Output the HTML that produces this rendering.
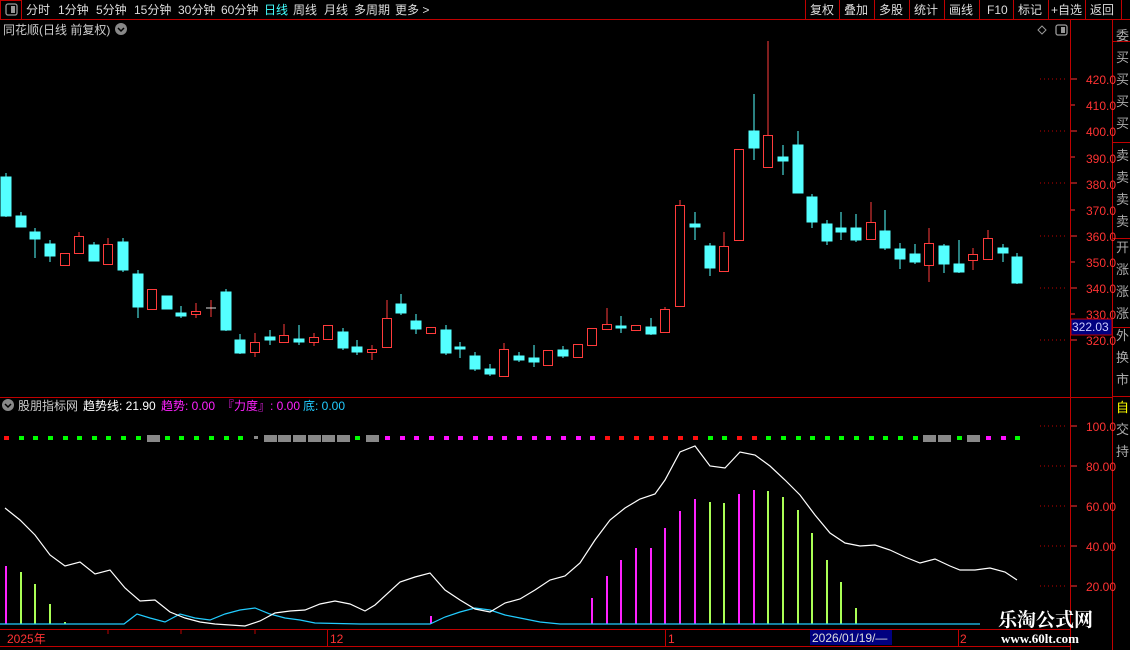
<!DOCTYPE html>
<html><head><meta charset="utf-8"><style>
body{margin:0;width:1130px;height:650px;background:#000;overflow:hidden;font-family:"Liberation Sans","Noto Sans CJK SC",sans-serif;}
svg{position:absolute;left:0;top:0}
</style></head><body>
<svg width="1130" height="650" xmlns="http://www.w3.org/2000/svg" font-family="Liberation Sans, Noto Sans CJK SC, sans-serif">
<!-- top bar -->
<g stroke="#c00000" fill="none">
<line x1="0" y1="19.5" x2="1130" y2="19.5"/>
<rect x="0.5" y="0.5" width="21" height="19"/>
<line x1="805.5" y1="0" x2="805.5" y2="19"/><line x1="839.5" y1="0" x2="839.5" y2="19"/><line x1="874.5" y1="0" x2="874.5" y2="19"/><line x1="909.5" y1="0" x2="909.5" y2="19"/><line x1="944.5" y1="0" x2="944.5" y2="19"/><line x1="979.5" y1="0" x2="979.5" y2="19"/><line x1="1013.5" y1="0" x2="1013.5" y2="19"/><line x1="1048.5" y1="0" x2="1048.5" y2="19"/><line x1="1085.5" y1="0" x2="1085.5" y2="19"/><line x1="1121.5" y1="0" x2="1121.5" y2="19"/>
<line x1="1070.5" y1="19" x2="1070.5" y2="650"/>
<line x1="1112.5" y1="19" x2="1112.5" y2="650"/>
<line x1="0" y1="397.5" x2="1112" y2="397.5"/>
<line x1="0" y1="629.5" x2="1070" y2="629.5"/>
<line x1="0" y1="646.5" x2="1070" y2="646.5"/>
<line x1="1112" y1="41.5" x2="1130" y2="41.5"/><line x1="1112" y1="142.5" x2="1130" y2="142.5"/><line x1="1112" y1="238.5" x2="1130" y2="238.5"/><line x1="1112" y1="327.5" x2="1130" y2="327.5"/><line x1="1112" y1="396.5" x2="1130" y2="396.5"/>
</g>
<rect x="6" y="4" width="11" height="11" rx="2" fill="none" stroke="#999" stroke-width="1.3"/><rect x="11" y="6" width="4" height="7" fill="#999"/>
<g font-size="12" fill="#ddd">
<text x="26" y="14">分时</text><text x="58" y="14">1分钟</text><text x="96" y="14">5分钟</text><text x="134" y="14">15分钟</text><text x="178" y="14">30分钟</text><text x="221" y="14">60分钟</text>
<text x="264" y="14" fill="#4ff">日线</text><text x="293" y="14">周线</text><text x="324" y="14">月线</text><text x="354" y="14">多周期</text><text x="395" y="14">更多 &gt;</text>
<text x="810" y="14">复权</text><text x="844" y="14">叠加</text><text x="879" y="14">多股</text><text x="914" y="14">统计</text><text x="949" y="14">画线</text><text x="987" y="14">F10</text><text x="1018" y="14">标记</text><text x="1051" y="14">+自选</text><text x="1090" y="14">返回</text>
<text x="3" y="34" fill="#ccc">同花顺(日线 前复权)</text>
</g>
<circle cx="121" cy="29" r="6" fill="#888"/><path d="M118 28l3 3 3-3" stroke="#000" stroke-width="1.5" fill="none"/>
<path d="M1042 26l4 4-4 4-4-4z" fill="none" stroke="#999"/>
<rect x="1056" y="25" width="11" height="10" rx="2" fill="none" stroke="#999" stroke-width="1.3"/><rect x="1061" y="27" width="4" height="6" fill="#999"/>
<!-- price axis -->
<g font-size="12" fill="#ff3333">
<text x="1086" y="84">420.0</text><text x="1086" y="110">410.0</text><text x="1086" y="136">400.0</text><text x="1086" y="163">390.0</text><text x="1086" y="189">380.0</text><text x="1086" y="215">370.0</text><text x="1086" y="241">360.0</text><text x="1086" y="267">350.0</text><text x="1086" y="293">340.0</text><text x="1086" y="319">330.0</text><text x="1086" y="345">320.0</text>
</g>
<g stroke="#ff3333"><line x1="1071" y1="79" x2="1077" y2="79"/><line x1="1071" y1="105" x2="1075" y2="105"/><line x1="1071" y1="131" x2="1077" y2="131"/><line x1="1071" y1="157" x2="1075" y2="157"/><line x1="1071" y1="183" x2="1077" y2="183"/><line x1="1071" y1="210" x2="1075" y2="210"/><line x1="1071" y1="236" x2="1077" y2="236"/><line x1="1071" y1="262" x2="1075" y2="262"/><line x1="1071" y1="288" x2="1077" y2="288"/><line x1="1071" y1="314" x2="1075" y2="314"/><line x1="1071" y1="340" x2="1077" y2="340"/></g>
<g stroke="#c00000" stroke-dasharray="1 3"><line x1="1040" y1="79" x2="1068" y2="79"/><line x1="1040" y1="131" x2="1068" y2="131"/><line x1="1040" y1="183" x2="1068" y2="183"/><line x1="1040" y1="236" x2="1068" y2="236"/><line x1="1040" y1="288" x2="1068" y2="288"/><line x1="1040" y1="340" x2="1068" y2="340"/>
<line x1="1040" y1="426" x2="1068" y2="426"/><line x1="1040" y1="466" x2="1068" y2="466"/><line x1="1040" y1="506" x2="1068" y2="506"/><line x1="1040" y1="546" x2="1068" y2="546"/><line x1="1040" y1="586" x2="1068" y2="586"/></g>
<rect x="1071" y="319" width="41" height="16" fill="#000080" stroke="#c00000"/>
<text x="1072" y="331" font-size="12" fill="#ccf">322.03</text>
<g font-size="13" fill="#aaa"><text x="1116" y="40">委</text><text x="1116" y="62">买</text><text x="1116" y="84">买</text><text x="1116" y="106">买</text><text x="1116" y="128">买</text><text x="1116" y="160">卖</text><text x="1116" y="182">卖</text><text x="1116" y="204">卖</text><text x="1116" y="226">卖</text><text x="1116" y="252">开</text><text x="1116" y="274">涨</text><text x="1116" y="296">涨</text><text x="1116" y="318">涨</text><text x="1116" y="340">外</text><text x="1116" y="362">换</text><text x="1116" y="384">市</text>
<text x="1116" y="412" fill="#ff0">自</text><text x="1116" y="434">交</text><text x="1116" y="456">持</text></g>
<!-- candles -->
<g id="c" stroke-width="1"></g>
<g>
<!-- cyan filled: x center, body top,bottom, wick top,bottom -->
</g>
<g stroke="#54ffff" fill="#54ffff">
<line x1="6" y1="173" x2="6" y2="217"/><rect x="1" y="177" width="10" height="39"/>
<rect x="16" y="216" width="10" height="11"/><line x1="21" y1="212" x2="21" y2="227"/>
<line x1="35" y1="228" x2="35" y2="258"/><rect x="30" y="232" width="10" height="7"/>
<line x1="50" y1="240" x2="50" y2="262"/><rect x="45" y="244" width="10" height="12"/>
<line x1="94" y1="242" x2="94" y2="261"/><rect x="89" y="245" width="10" height="16"/>
<line x1="123" y1="238" x2="123" y2="272"/><rect x="118" y="242" width="10" height="28"/>
<line x1="138" y1="270" x2="138" y2="318"/><rect x="133" y="274" width="10" height="33"/>
<rect x="162" y="296" width="10" height="13"/>
<line x1="181" y1="306" x2="181" y2="318"/><rect x="176" y="313" width="10" height="3"/>
<line x1="226" y1="289" x2="226" y2="331"/><rect x="221" y="292" width="10" height="38"/>
<line x1="240" y1="334" x2="240" y2="354"/><rect x="235" y="340" width="10" height="13"/>
<line x1="270" y1="330" x2="270" y2="345"/><rect x="265" y="337" width="10" height="3"/>
<line x1="299" y1="325" x2="299" y2="345"/><rect x="294" y="339" width="10" height="3"/>
<line x1="343" y1="328" x2="343" y2="350"/><rect x="338" y="332" width="10" height="16"/>
<line x1="357" y1="340" x2="357" y2="355"/><rect x="352" y="347" width="10" height="5"/>
<line x1="401" y1="294" x2="401" y2="315"/><rect x="396" y="304" width="10" height="9"/>
<line x1="416" y1="314" x2="416" y2="334"/><rect x="411" y="321" width="10" height="8"/>
<line x1="446" y1="325" x2="446" y2="355"/><rect x="441" y="330" width="10" height="23"/>
<line x1="460" y1="342" x2="460" y2="358"/><rect x="455" y="347" width="10" height="2"/>
<line x1="475" y1="352" x2="475" y2="371"/><rect x="470" y="356" width="10" height="13"/>
<line x1="490" y1="364" x2="490" y2="376"/><rect x="485" y="369" width="10" height="5"/>
<line x1="519" y1="352" x2="519" y2="362"/><rect x="514" y="356" width="10" height="4"/>
<line x1="534" y1="345" x2="534" y2="367"/><rect x="529" y="358" width="10" height="4"/>
<line x1="563" y1="346" x2="563" y2="358"/><rect x="558" y="350" width="10" height="6"/>
<line x1="621" y1="316" x2="621" y2="333"/><rect x="616" y="326" width="10" height="2"/>
<line x1="651" y1="318" x2="651" y2="335"/><rect x="646" y="327" width="10" height="7"/>
<line x1="695" y1="212" x2="695" y2="240"/><rect x="690" y="224" width="10" height="3"/>
<line x1="710" y1="243" x2="710" y2="276"/><rect x="705" y="246" width="10" height="22"/>
<line x1="754" y1="94" x2="754" y2="160"/><rect x="749" y="131" width="10" height="17"/>
<line x1="783" y1="145" x2="783" y2="175"/><rect x="778" y="157" width="10" height="4"/>
<line x1="798" y1="131" x2="798" y2="193"/><rect x="793" y="145" width="10" height="48"/>
<line x1="812" y1="194" x2="812" y2="228"/><rect x="807" y="197" width="10" height="25"/>
<line x1="827" y1="220" x2="827" y2="245"/><rect x="822" y="224" width="10" height="17"/>
<line x1="841" y1="212" x2="841" y2="240"/><rect x="836" y="228" width="10" height="4"/>
<line x1="856" y1="214" x2="856" y2="242"/><rect x="851" y="228" width="10" height="12"/>
<line x1="885" y1="210" x2="885" y2="250"/><rect x="880" y="231" width="10" height="17"/>
<line x1="900" y1="243" x2="900" y2="269"/><rect x="895" y="249" width="10" height="10"/>
<line x1="915" y1="244" x2="915" y2="264"/><rect x="910" y="254" width="10" height="8"/>
<line x1="944" y1="244" x2="944" y2="273"/><rect x="939" y="246" width="10" height="18"/>
<line x1="959" y1="240" x2="959" y2="273"/><rect x="954" y="264" width="10" height="8"/>
<line x1="1003" y1="244" x2="1003" y2="262"/><rect x="998" y="248" width="10" height="5"/>
<line x1="1017" y1="253" x2="1017" y2="284"/><rect x="1012" y="257" width="10" height="26"/>
</g>
<g stroke="#ff3b3b" fill="#000">
<rect x="60.5" y="253.5" width="9" height="12"/>
<line x1="79" y1="232" x2="79" y2="236"/><rect x="74.5" y="236.5" width="9" height="17"/>
<line x1="108" y1="238" x2="108" y2="244"/><rect x="103.5" y="244.5" width="9" height="20"/>
<rect x="147.5" y="289.5" width="9" height="20"/>
<line x1="196" y1="303" x2="196" y2="318"/><rect x="191.5" y="311.5" width="9" height="3"/>
<line x1="211" y1="300" x2="211" y2="317"/><line x1="206" y1="308" x2="216" y2="308" stroke="#ddd"/>
<line x1="255" y1="333" x2="255" y2="357"/><rect x="250.5" y="342.5" width="9" height="10"/>
<line x1="284" y1="324" x2="284" y2="343"/><rect x="279.5" y="335.5" width="9" height="7"/>
<line x1="314" y1="333" x2="314" y2="346"/><rect x="309.5" y="337.5" width="9" height="5"/>
<rect x="323.5" y="325.5" width="9" height="14"/>
<line x1="372" y1="345" x2="372" y2="360"/><rect x="367.5" y="349.5" width="9" height="3"/>
<line x1="387" y1="300" x2="387" y2="318"/><rect x="382.5" y="318.5" width="9" height="29"/>
<rect x="426.5" y="327.5" width="9" height="6"/>
<line x1="504" y1="343" x2="504" y2="349"/><rect x="499.5" y="349.5" width="9" height="27"/>
<rect x="543.5" y="350.5" width="9" height="15"/>
<rect x="573.5" y="344.5" width="9" height="13"/>
<rect x="587.5" y="328.5" width="9" height="17"/>
<line x1="607" y1="308" x2="607" y2="324"/><rect x="602.5" y="324.5" width="9" height="5"/>
<rect x="631.5" y="325.5" width="9" height="5"/>
<line x1="665" y1="307" x2="665" y2="309"/><rect x="660.5" y="309.5" width="9" height="23"/>
<line x1="680" y1="200" x2="680" y2="205"/><rect x="675.5" y="205.5" width="9" height="101"/>
<line x1="724" y1="232" x2="724" y2="246"/><rect x="719.5" y="246.5" width="9" height="25"/>
<rect x="734.5" y="149.5" width="9" height="91"/>
<line x1="768" y1="41" x2="768" y2="135"/><rect x="763.5" y="135.5" width="9" height="32"/>
<line x1="871" y1="202" x2="871" y2="222"/><rect x="866.5" y="222.5" width="9" height="17"/>
<line x1="929" y1="228" x2="929" y2="243"/><line x1="929" y1="266" x2="929" y2="282"/><rect x="924.5" y="243.5" width="9" height="22"/>
<line x1="973" y1="248" x2="973" y2="270"/><rect x="968.5" y="254.5" width="9" height="6"/>
<line x1="988" y1="230" x2="988" y2="238"/><rect x="983.5" y="238.5" width="9" height="21"/>
</g>
<!-- indicator header -->
<circle cx="8" cy="405" r="6" fill="#888"/><path d="M5 404l3 3 3-3" stroke="#000" stroke-width="1.5" fill="none"/>
<g font-size="12"><text x="18" y="410" fill="#ccc">股朋指标网</text><text x="83" y="410" fill="#fff">趋势线: 21.90</text><text x="161" y="410" fill="#ff22ff">趋势: 0.00</text><text x="222" y="410" fill="#ff22ff">『力度』: 0.00</text><text x="303" y="410" fill="#22ccff">底: 0.00</text></g>
<!-- lower axis -->
<g font-size="12" fill="#ff3333"><text x="1086" y="431">100.0</text><text x="1086" y="471">80.00</text><text x="1086" y="511">60.00</text><text x="1086" y="551">40.00</text><text x="1086" y="591">20.00</text></g>
<g stroke="#ff3333"><line x1="1071" y1="426" x2="1077" y2="426"/><line x1="1071" y1="466" x2="1077" y2="466"/><line x1="1071" y1="506" x2="1077" y2="506"/><line x1="1071" y1="546" x2="1077" y2="546"/><line x1="1071" y1="586" x2="1077" y2="586"/></g>
<!-- dots -->
<g>
<rect x="4" y="436" width="5" height="4" fill="#ff1010"/>
<g fill="#00ff00"><rect x="19" y="436" width="5" height="4"/><rect x="33" y="436" width="5" height="4"/><rect x="48" y="436" width="5" height="4"/><rect x="63" y="436" width="5" height="4"/><rect x="77" y="436" width="5" height="4"/><rect x="92" y="436" width="5" height="4"/><rect x="106" y="436" width="5" height="4"/><rect x="121" y="436" width="5" height="4"/><rect x="136" y="436" width="5" height="4"/><rect x="165" y="436" width="5" height="4"/><rect x="179" y="436" width="5" height="4"/><rect x="194" y="436" width="5" height="4"/><rect x="209" y="436" width="5" height="4"/><rect x="224" y="436" width="5" height="4"/><rect x="238" y="436" width="5" height="4"/><rect x="355" y="436" width="5" height="4"/>
<rect x="708" y="436" width="5" height="4"/><rect x="722" y="436" width="5" height="4"/><rect x="766" y="436" width="5" height="4"/><rect x="781" y="436" width="5" height="4"/><rect x="796" y="436" width="5" height="4"/><rect x="810" y="436" width="5" height="4"/><rect x="825" y="436" width="5" height="4"/><rect x="839" y="436" width="5" height="4"/><rect x="854" y="436" width="5" height="4"/><rect x="869" y="436" width="5" height="4"/><rect x="883" y="436" width="5" height="4"/><rect x="898" y="436" width="5" height="4"/><rect x="913" y="436" width="5" height="4"/><rect x="957" y="436" width="5" height="4"/><rect x="1015" y="436" width="5" height="4"/></g>
<g fill="#888"><rect x="147" y="435" width="13" height="7"/><rect x="254" y="436" width="4" height="3"/><rect x="264" y="435" width="13" height="7"/><rect x="278" y="435" width="13" height="7"/><rect x="293" y="435" width="13" height="7"/><rect x="308" y="435" width="13" height="7"/><rect x="322" y="435" width="13" height="7"/><rect x="337" y="435" width="13" height="7"/><rect x="366" y="435" width="13" height="7"/><rect x="923" y="435" width="13" height="7"/><rect x="938" y="435" width="13" height="7"/><rect x="967" y="435" width="13" height="7"/></g>
<g fill="#ff10ff"><rect x="385" y="436" width="5" height="4"/><rect x="400" y="436" width="5" height="4"/><rect x="414" y="436" width="5" height="4"/><rect x="429" y="436" width="5" height="4"/><rect x="444" y="436" width="5" height="4"/><rect x="458" y="436" width="5" height="4"/><rect x="473" y="436" width="5" height="4"/><rect x="488" y="436" width="5" height="4"/><rect x="502" y="436" width="5" height="4"/><rect x="517" y="436" width="5" height="4"/><rect x="532" y="436" width="5" height="4"/><rect x="546" y="436" width="5" height="4"/><rect x="561" y="436" width="5" height="4"/><rect x="576" y="436" width="5" height="4"/><rect x="590" y="436" width="5" height="4"/><rect x="986" y="436" width="5" height="4"/><rect x="1001" y="436" width="5" height="4"/></g>
<g fill="#ff1010"><rect x="605" y="436" width="5" height="4"/><rect x="619" y="436" width="5" height="4"/><rect x="634" y="436" width="5" height="4"/><rect x="649" y="436" width="5" height="4"/><rect x="663" y="436" width="5" height="4"/><rect x="678" y="436" width="5" height="4"/><rect x="693" y="436" width="5" height="4"/><rect x="737" y="436" width="5" height="4"/><rect x="752" y="436" width="5" height="4"/></g>
</g>
<!-- bars -->
<g stroke-width="2">
<line x1="6" y1="566" x2="6" y2="624" stroke="#ff22ff"/>
<g stroke="#aaff55"><line x1="21" y1="572" x2="21" y2="624"/><line x1="35" y1="584" x2="35" y2="624"/><line x1="50" y1="604" x2="50" y2="624"/><line x1="65" y1="622" x2="65" y2="624"/>
<line x1="710" y1="502" x2="710" y2="624"/><line x1="724" y1="503" x2="724" y2="624"/><line x1="768" y1="491" x2="768" y2="624"/><line x1="783" y1="497" x2="783" y2="624"/><line x1="798" y1="510" x2="798" y2="624"/><line x1="812" y1="533" x2="812" y2="624"/><line x1="827" y1="560" x2="827" y2="624"/><line x1="841" y1="582" x2="841" y2="624"/><line x1="856" y1="608" x2="856" y2="624"/></g>
<g stroke="#ff22ff"><line x1="431" y1="616" x2="431" y2="624"/><line x1="592" y1="598" x2="592" y2="624"/><line x1="607" y1="576" x2="607" y2="624"/><line x1="621" y1="560" x2="621" y2="624"/><line x1="636" y1="548" x2="636" y2="624"/><line x1="651" y1="548" x2="651" y2="624"/><line x1="665" y1="528" x2="665" y2="624"/><line x1="680" y1="511" x2="680" y2="624"/><line x1="695" y1="499" x2="695" y2="624"/><line x1="739" y1="494" x2="739" y2="624"/><line x1="754" y1="490" x2="754" y2="624"/></g>
</g>
<polyline fill="none" stroke="#22ccff" stroke-width="1.2" points="0,624 124,624 137,614 150,618 165,622 180,614 195,618 210,620 225,614 240,610 255,608 270,614 285,618 300,620 315,623 360,624 430,624 445,617 460,612 475,608 490,610 505,615 520,618 540,622 560,624 980,624"/>
<polyline fill="none" stroke="#fff" stroke-width="1.2" points="5,508 20,520 35,535 50,555 65,566 80,562 95,574 110,570 125,588 140,601 155,600 170,612 185,618 200,622 215,624 230,625 245,626 260,621 275,613 290,611 305,610 320,604 335,601 350,604 365,611 375,605 400,582 415,577 430,573 445,590 460,600 475,609 490,612 505,603 520,599 535,590 550,580 565,576 580,563 595,540 610,520 625,508 640,499 655,494 665,480 680,452 695,446 710,466 725,468 740,452 755,455 770,466 785,480 800,495 815,515 830,533 845,543 860,546 875,545 890,550 905,557 920,563 935,559 950,566 960,570 975,570 990,568 1005,572 1017,580"/>
<!-- date axis -->
<g stroke="#c00000"><line x1="108" y1="630" x2="108" y2="634"/><line x1="181" y1="630" x2="181" y2="634"/><line x1="255" y1="630" x2="255" y2="634"/><line x1="327.5" y1="630" x2="327.5" y2="646"/><line x1="665.5" y1="630" x2="665.5" y2="646"/><line x1="958.5" y1="630" x2="958.5" y2="646"/></g>
<g font-size="12" fill="#ff3333"><text x="7" y="643">2025年</text><text x="330" y="643">12</text><text x="668" y="643">1</text><text x="960" y="643">2</text></g>
<rect x="810" y="630" width="82" height="15" fill="#000080"/>
<text x="812" y="642" font-size="12" fill="#ddd">2026/01/19/—</text>
<!-- watermark -->
<text x="998" y="626" font-size="19" font-weight="bold" fill="#fff" font-family="Noto Serif CJK SC, serif">乐淘公式网</text>
<text x="1001" y="643" font-size="13" font-weight="bold" fill="#fff" font-family="Liberation Serif, serif">www.60lt.com</text>
</svg>
</body></html>
